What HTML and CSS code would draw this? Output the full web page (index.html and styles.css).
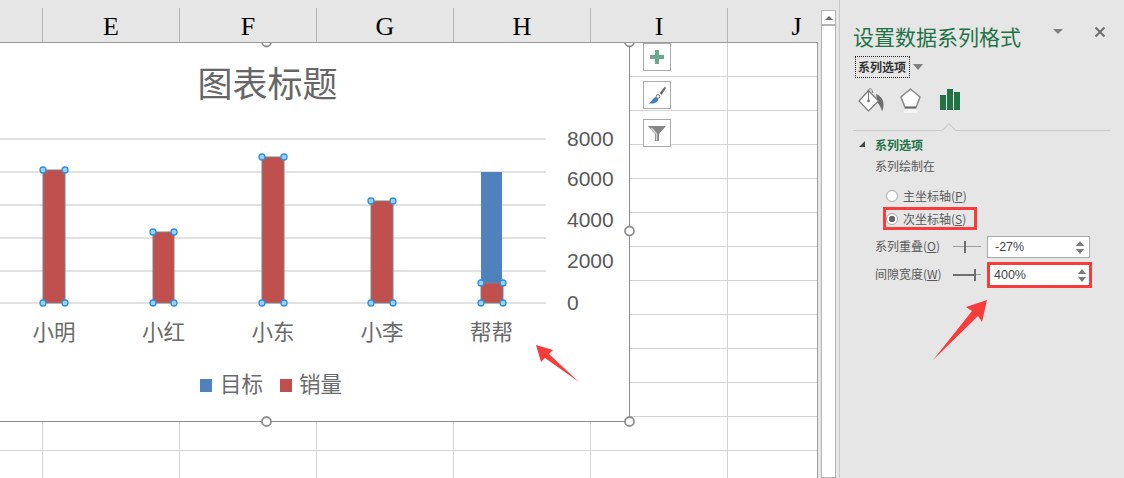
FILE: index.html
```html
<!DOCTYPE html>
<html lang="zh-CN">
<head>
<meta charset="utf-8">
<title>设置数据系列格式</title>
<link rel="stylesheet" href="styles.css">
</head>
<body>
<div class="app">
  <section class="sheet">
    <header class="col-head">
      <div class="col col-first"></div>
      <div class="col">E</div>
      <div class="col">F</div>
      <div class="col">G</div>
      <div class="col">H</div>
      <div class="col">I</div>
      <div class="col">J</div>
    </header>
    <div class="grid">
      <div class="chart">
        <svg class="chart-svg" width="640" height="390" viewBox="0 42 640 390">
          <g class="gridlines">
            <line x1="0" x2="546" y1="139" y2="139"/>
            <line x1="0" x2="546" y1="172" y2="172"/>
            <line x1="0" x2="546" y1="205" y2="205"/>
            <line x1="0" x2="546" y1="238" y2="238"/>
            <line x1="0" x2="546" y1="271" y2="271"/>
            <line x1="0" x2="546" y1="303" y2="303"/>
          </g>
          <text class="chart-title" x="267.500" y="97" text-anchor="middle">图表标题</text>
          <rect class="bar-blue" x="481" y="172" width="21" height="112"/>
          <g class="bars">
            <rect x="43" y="170" width="22" height="133"/>
            <rect x="153" y="232" width="21" height="71"/>
            <rect x="262" y="157" width="22" height="146"/>
            <rect x="371" y="201" width="22" height="102"/>
            <rect x="481" y="283" width="22" height="20"/>
          </g>
          <g class="pts">
            <circle cx="43" cy="170" r="3"/><circle cx="65" cy="170" r="3"/><circle cx="43" cy="303" r="3"/><circle cx="65" cy="303" r="3"/>
            <circle cx="153" cy="232" r="3"/><circle cx="174" cy="232" r="3"/><circle cx="153" cy="303" r="3"/><circle cx="174" cy="303" r="3"/>
            <circle cx="262" cy="157" r="3"/><circle cx="284" cy="157" r="3"/><circle cx="262" cy="303" r="3"/><circle cx="284" cy="303" r="3"/>
            <circle cx="371" cy="201" r="3"/><circle cx="393" cy="201" r="3"/><circle cx="371" cy="303" r="3"/><circle cx="393" cy="303" r="3"/>
            <circle cx="481" cy="283" r="3"/><circle cx="503" cy="283" r="3"/><circle cx="481" cy="303" r="3"/><circle cx="503" cy="303" r="3"/>
          </g>
          <g class="axis-y">
            <text x="567" y="146">8000</text>
            <text x="567" y="186">6000</text>
            <text x="567" y="227">4000</text>
            <text x="567" y="268">2000</text>
            <text x="567" y="310">0</text>
          </g>
          <g class="axis-x" text-anchor="middle">
            <text x="54" y="340">小明</text>
            <text x="163.500" y="340">小红</text>
            <text x="273" y="340">小东</text>
            <text x="382" y="340">小李</text>
            <text x="491.500" y="340">帮帮</text>
          </g>
          <rect class="key-blue" x="200" y="379" width="12" height="13"/>
          <text class="legend" x="220" y="392">目标</text>
          <rect class="key-red" x="280" y="379" width="12" height="13"/>
          <text class="legend" x="299" y="392">销量</text>
          <g class="frame-handles">
            <circle cx="266.500" cy="42" r="4.500"/>
            <circle cx="629.500" cy="42" r="4.500"/>
            <circle cx="629.500" cy="231" r="4.500"/>
            <circle cx="266.500" cy="421.500" r="4.500"/>
            <circle cx="629.500" cy="421.500" r="4.500"/>
          </g>
          <path class="arrow" d="M536 345 L553 350 L549 354 L579 382 L545 358 L541 362 Z"/>
        </svg>
      </div>
      <div class="tools">
        <button class="tool" type="button">
          <svg width="16" height="16" viewBox="0 0 16 16"><path class="plus" d="M6 1h4v5h5v4h-5v5H6v-5H1V6h5z"/></svg>
        </button>
        <button class="tool" type="button">
          <svg width="20" height="20" viewBox="0 0 20 20">
            <path class="brush-handle" d="M12.500 8 L18 1.500 L19 3 L14.500 10 Z"/>
            <path class="brush-head" d="M1.500 18.500 C4 17.500 5 14 8.500 12 L11.500 14.500 C10 18 6 19 1.500 18.500 Z"/>
            <circle class="brush-ring" cx="11" cy="11.500" r="1.800"/>
          </svg>
        </button>
        <button class="tool" type="button">
          <svg width="20" height="20" viewBox="0 0 20 20"><path class="funnel" d="M1 3 H19 L12 11 V18 H8 V11 Z"/><path class="funnel-in" d="M4.500 5 L9.500 11 V17.500"/></svg>
        </button>
      </div>
    </div>
  </section>

  <div class="scrollbar">
    <div class="scroll-btn"><span class="tri-up-sm"></span></div>
  </div>

  <aside class="panel">
    <div class="panel-head">
      <h1 class="panel-title">设置数据系列格式</h1>
      <span class="tri-down"></span>
      <svg class="close" width="12" height="12" viewBox="0 0 12 12"><path d="M1.500 1.500L10.500 10.500M10.500 1.500L1.500 10.500"/></svg>
    </div>
    <div class="options-row">
      <span class="options-label">系列选项</span>
      <span class="tri-down"></span>
    </div>
    <div class="icon-tabs">
      <svg width="26" height="26" viewBox="0 0 26 26">
        <path class="bucket-fill" d="M18 7 C23 9 25.500 13 25.500 17 C25.500 20 25 23 24 24.500 C23.500 21 21.500 18 19.500 15.500 Z"/>
        <path class="bucket" d="M10.500 3.500 L20.500 14 L10.500 24 L1 14 Z"/>
        <path class="bucket-str" d="M10.500 14 V3.500 C10.500 1 13.500 1 14 3.500 L15 6"/>
        <circle class="bucket-dot" cx="10.500" cy="14" r="1.400"/>
      </svg>
      <svg width="24" height="26" viewBox="0 0 24 26">
        <path class="pent-foot" d="M5 21 H16 L17.500 26 H3.500 Z"/>
        <path class="pent" d="M10.500 2 L20 10 L16 20.500 H5 L1 10 Z"/>
        <path class="pent-line" d="M5 20.500 H16"/>
      </svg>
      <svg class="tab-active" width="20" height="22" viewBox="0 0 20 22">
        <rect x="0" y="6" width="6" height="15"/>
        <rect x="7" y="0" width="6" height="21"/>
        <rect x="14" y="3" width="6" height="18"/>
      </svg>
    </div>
    <div class="divider"><span class="notch"></span></div>
    <div class="section-head"><span class="tri-corner"></span><span>系列选项</span></div>
    <div class="section-body">
      <div class="plot-on">系列绘制在</div>
      <div class="radios">
        <label class="radio-row"><span class="radio"></span><span class="radio-text">主坐标轴(<u>P</u>)</span></label>
        <label class="radio-row radio-row-on"><span class="radio radio-on"></span><span class="radio-text">次坐标轴(<u>S</u>)</span></label>
      </div>
      <div class="field">
        <span class="field-label">系列重叠(<u>O</u>)</span>
        <span class="slider"><span class="slider-fill slider-fill-a"></span><span class="slider-knob"></span></span>
        <span class="spin"><span class="spin-val">-27%</span><span class="spin-arrows"><span class="tri-up"></span><span class="tri-dn"></span></span></span>
      </div>
      <div class="field">
        <span class="field-label">间隙宽度(<u>W</u>)</span>
        <span class="slider slider-end"><span class="slider-fill slider-fill-b"></span><span class="slider-knob"></span></span>
        <span class="spin spin-hot"><span class="spin-val">400%</span><span class="spin-arrows"><span class="tri-up"></span><span class="tri-dn"></span></span></span>
      </div>
    </div>
    <svg class="panel-arrow" width="60" height="66" viewBox="0 0 60 66"><path d="M0 62 L39 13 L33 9 L54 2 L49 24 L45 18 Z"/></svg>
  </aside>
</div>
</body>
</html>
```

FILE: styles.css
```css
* { box-sizing: border-box; }
html, body { margin: 0; padding: 0; }
body {
  width: 1124px;
  height: 478px;
  overflow: hidden;
  background: #e6e6e6;
  font-family: "Noto Sans CJK SC", "Liberation Sans", sans-serif;
}
.app { display: flex; width: 1124px; height: 478px; }

/* sheet */
.sheet { width: 818px; height: 478px; display: flex; flex-direction: column; flex: none; overflow: visible; }
.col-head {
  position: relative;
  z-index: 1;
  height: 43px;
  flex: none;
  display: flex;
  padding-top: 8px;
  background: #e6e6e6;
  border-bottom: 1px solid #9a9a9a;
  overflow: hidden;
}
.col {
  width: 137px;
  flex: none;
  border-right: 1px solid #b4b4b4;
  text-align: center;
  font: 26px/38px "Liberation Serif", serif;
  color: #000;
}
.col:last-child { border-right: 0; }
.col-first { width: 43px; }
.grid {
  position: relative;
  flex: 1;
  border-right: 1px solid #a0a0a0;
  background-color: #fff;
  background-image:
    linear-gradient(to right, transparent 136px, #d4d4d4 136px),
    linear-gradient(to bottom, transparent 33px, #d4d4d4 33px);
  background-size: 137px 100%, 100% 34px;
  background-position: 43px 0, 0 0;
}
.chart {
  position: absolute;
  left: 0;
  top: -1px;
  width: 630px;
  height: 380px;
  background: #fff;
  border-right: 1px solid #8e8e8e;
  border-bottom: 1px solid #8e8e8e;
}
.chart-svg { position: absolute; left: 0; top: 0; overflow: visible; display: block; }
.gridlines line { stroke: #d9d9d9; stroke-width: 1.500; }
.chart-title { font-size: 35px; fill: #666; }
.bar-blue { fill: #4f81bd; }
.bars rect { fill: #c0504d; stroke: #808080; stroke-width: 1; }
.pts circle { fill: #9fd0f6; stroke: #2b90e4; stroke-width: 1.300; }
.axis-y text { font-family: "Liberation Sans", sans-serif; font-size: 21px; fill: #595959; }
.axis-x text { font-size: 21.500px; fill: #6a6a6a; }
.legend { font-size: 21.500px; fill: #6a6a6a; }
.key-blue { fill: #4f81bd; }
.key-red { fill: #c0504d; }
.frame-handles circle { fill: #fff; stroke: #8e8e8e; stroke-width: 1.800; }
.arrow { fill: #f83b3b; }

.tools { position: absolute; left: 643px; top: 0; display: flex; flex-direction: column; gap: 10px; }
.tool {
  width: 28px;
  height: 28px;
  padding: 0;
  background: #fff;
  border: 1px solid #a9a9a9;
  display: flex;
  align-items: center;
  justify-content: center;
}
.plus { fill: #68a88f; }
.brush-handle { fill: #6c6c6c; }
.brush-head { fill: #3f7fc4; }
.brush-ring { fill: #fff; stroke: #6c6c6c; stroke-width: 1; }
.funnel { fill: #868686; }
.funnel-in { fill: none; stroke: #dcdcdc; stroke-width: 1.300; }

/* scrollbar */
.scrollbar {
  flex: none;
  width: 15px;
  height: 468px;
  margin: 10px 0 0 3px;
  background: #fff;
  border: 1px solid #b4b4b4;
}
.scroll-btn {
  height: 15px;
  border-bottom: 2px solid #b4b4b4;
  display: flex;
  align-items: center;
  justify-content: center;
}
.tri-up-sm { border: 4px solid transparent; border-top: 0; border-bottom: 4px solid #6c6c6c; }

/* panel */
.panel {
  position: relative;
  flex: none;
  width: 285px;
  margin-left: 3px;
  border-left: 1px solid #c8c8c8;
  padding-left: 13px;
  color: #595959;
  font-size: 12px;
}
.panel-head {
  height: 28px;
  margin-top: 22px;
  display: flex;
  align-items: center;
}
.panel-title {
  margin: 0;
  font-size: 21px;
  line-height: 28px;
  font-weight: 400;
  color: #217346;
  width: 200px;
  flex: none;
}
.panel-head .tri-down { margin: 0 0 9px 0; border-width: 5px 5px 0; }
.close { margin: 0 0 9px 31px; }
.close path { stroke: #6e6e6e; stroke-width: 2; fill: none; }
.tri-down { border-style: solid; border-color: #7f7f7f transparent transparent; border-width: 6px 5px 0; width: 0; height: 0; }
.options-row { display: flex; align-items: center; height: 22px; margin: 6px 0 0 2px; gap: 3px; }
.options-label {
  height: 22px;
  width: 55px;
  line-height: 19px;
  padding-left: 2px;
  border: 1px dotted #222;
  color: #333;
  font-weight: 700;
}
.icon-tabs { display: flex; align-items: flex-start; height: 26px; margin: 9px 0 0 5px; gap: 16px; }
.icon-tabs svg { flex: none; display: block; }
.tab-active { margin: 2px 0 0 0; }
.tab-active rect { fill: #217346; }
.bucket { fill: #fff; stroke: #777; stroke-width: 1.200; }
.bucket-fill { fill: #6f6f6f; }
.bucket-str { fill: none; stroke: #777; stroke-width: 1; }
.bucket-dot { fill: #777; }
.pent { fill: #fff; stroke: #8a8a8a; stroke-width: 1.500; }
.pent-line { stroke: #666; stroke-width: 2; }
.pent-foot { fill: #f4f4f4; }
.divider {
  position: relative;
  width: 257px;
  height: 1px;
  margin-top: 17px;
  background: #c9c9c9;
}
.notch {
  position: absolute;
  left: 91px;
  top: -5px;
  width: 10px;
  height: 10px;
  transform: rotate(45deg);
  background: #e6e6e6;
  border-left: 1px solid #c9c9c9;
  border-top: 1px solid #c9c9c9;
}
.section-head {
  display: flex;
  align-items: center;
  height: 18px;
  margin-top: 4px;
  color: #217346;
  font-weight: 700;
  padding-left: 6px;
  gap: 10px;
}
.tri-corner { width: 0; height: 0; border-style: solid; border-width: 0 0 6px 6px; border-color: transparent transparent #444; }
.section-body { padding-left: 22px; }
.plot-on { height: 18px; line-height: 18px; margin-top: 4px; }
.radios { margin: 10px 0 3px; }
.radio-row { display: flex; align-items: center; width: 94px; height: 22px; margin-left: 8px; gap: 5px; padding-left: 3px; }
.radio-row-on { height: 23px; padding-top: 1px; outline: 3px solid #f83b3b; outline-offset: -3px; }
.radio-text { padding-bottom: 2px; }
.radio { width: 12px; height: 12px; border-radius: 50%; border: 1px solid #a6a6a6; background: #fff; flex: none; }
.radio-on { background: radial-gradient(circle, #666 0 3px, #fff 3.500px); }
.field { display: flex; align-items: center; height: 28px; }
.field-label { width: 78px; flex: none; padding-bottom: 3px; }
.slider { position: relative; width: 28px; height: 12px; margin-right: 6px; flex: none; }
.slider::before { content: ""; position: absolute; left: 0; right: 0; top: 5px; height: 1px; background: #9c9c9c; }
.slider-fill { position: absolute; left: 0; top: 5px; height: 2px; background: #6f6f6f; }
.slider-fill-a { width: 0; }
.slider-fill-b { width: 22px; }
.slider-knob { position: absolute; left: 11px; top: 0; width: 2px; height: 12px; background: #6f6f6f; }
.slider-end .slider-knob { left: 21px; }
.spin {
  display: flex;
  align-items: center;
  justify-content: space-between;
  width: 103px;
  height: 22px;
  background: #fff;
  border: 1px solid #a9a9a9;
  padding: 0 5px 0 7px;
}
.spin-hot { width: 105px; height: 26px; border: 3px solid #f83b3b; padding: 0 3px 0 4px; }
.spin-val { font-family: "Liberation Sans", sans-serif; font-size: 12.500px; color: #444; padding-bottom: 1px; }
.spin-arrows { display: flex; flex-direction: column; gap: 3px; }
.tri-up { width: 0; height: 0; border-style: solid; border-width: 0 4px 5px; border-color: transparent transparent #7a7a7a; }
.tri-dn { width: 0; height: 0; border-style: solid; border-width: 5px 4px 0; border-color: #7a7a7a transparent transparent; }
.panel-arrow { position: absolute; left: 93px; top: 298px; }
.panel-arrow path { fill: #f83b3b; }
```
